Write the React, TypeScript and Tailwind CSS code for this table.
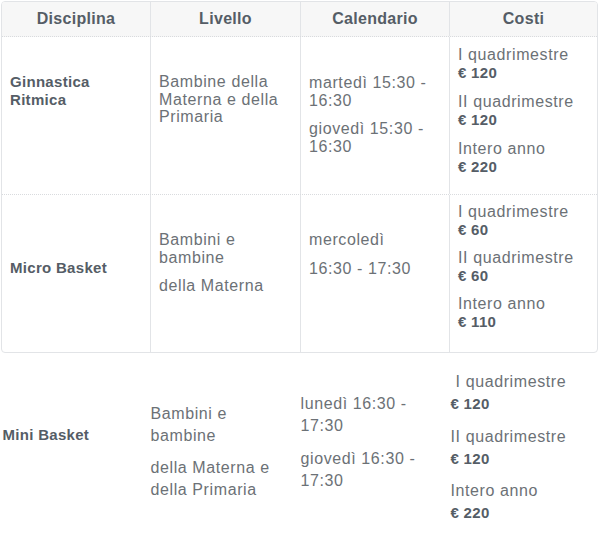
import type { ReactNode } from 'react'

type Cost = { label: string; price: string }

// one paragraph = list of lines
function Paras({ paras, gap }: { paras: string[][]; gap: string }) {
  return (
    <div className={`flex flex-col ${gap}`}>
      {paras.map((lines, i) => (
        <p key={i}>
          {lines.map((l, j) => (
            <span key={j}>
              {l}
              {j < lines.length - 1 && <br />}
            </span>
          ))}
        </p>
      ))}
    </div>
  )
}

function Costs({ items, gap }: { items: Cost[]; gap: string }) {
  return (
    <div className={`flex flex-col ${gap}`}>
      {items.map((c, i) => (
        <p key={i}>
          <span className="whitespace-pre">{c.label}</span>
          <br />
          <strong className="text-[15px] font-bold tracking-[0.3px] text-[#555d66]">{c.price}</strong>
        </p>
      ))}
    </div>
  )
}

function Cell({ children, className = '' }: { children: ReactNode; className?: string }) {
  return <div className={`px-2 ${className}`}>{children}</div>
}

const headers = ['Disciplina', 'Livello', 'Calendario', 'Costi']

export default function App() {
  return (
    <div className="w-[600px] h-[541px] bg-white font-['Liberation_Sans',Arial,sans-serif] text-[16px] tracking-[0.6px] text-[#6c7176]">
      {/* Bordered table */}
      <div className="ml-px mt-px w-[597px] border border-[#e2e4e7] rounded-[4px] overflow-hidden">
        {/* Header */}
        <div className="grid grid-cols-[148px_150px_149px_148px] h-[35px] bg-[#f7f7f7] border-b border-dotted border-b-[#d9dbde]">
          {headers.map((h, i) => (
            <div
              key={h}
              className={`flex items-center justify-center font-bold tracking-[0.3px] leading-[18px] text-[#555d66] ${i > 0 ? 'border-l border-[#e2e4e7]' : ''}`}
            >
              {h}
            </div>
          ))}
        </div>

        {/* Ginnastica Ritmica */}
        <div className="grid grid-cols-[148px_150px_149px_148px] h-[158px] border-b border-dotted border-b-[#d9dbde] leading-[17.5px]">
          <Cell className="pt-[36px] text-[15px] font-bold tracking-[0.3px] text-[#555d66]">
            Ginnastica
            <br />
            Ritmica
          </Cell>
          <Cell className="pt-[36px] border-l border-[#e2e4e7]">
            <Paras gap="gap-[11px]" paras={[['Bambine della', 'Materna e della', 'Primaria']]} />
          </Cell>
          <Cell className="pt-[37px] border-l border-[#e2e4e7]">
            <Paras
              gap="gap-[11px]"
              paras={[
                ['martedì 15:30 -', '16:30'],
                ['giovedì 15:30 -', '16:30'],
              ]}
            />
          </Cell>
          <Cell className="pt-[9px] border-l border-[#e2e4e7]">
            <Costs
              gap="gap-[12px]"
              items={[
                { label: 'I quadrimestre', price: '€ 120' },
                { label: 'II quadrimestre', price: '€ 120' },
                { label: 'Intero anno', price: '€ 220' },
              ]}
            />
          </Cell>
        </div>

        {/* Micro Basket */}
        <div className="grid grid-cols-[148px_150px_149px_148px] h-[157px] leading-[17.5px]">
          <Cell className="pt-[64px] text-[15px] font-bold tracking-[0.3px] text-[#555d66]">Micro Basket</Cell>
          <Cell className="pt-[36px] border-l border-[#e2e4e7]">
            <Paras gap="gap-[11px]" paras={[['Bambini e', 'bambine'], ['della Materna']]} />
          </Cell>
          <Cell className="pt-[36px] border-l border-[#e2e4e7]">
            <Paras gap="gap-[11px]" paras={[['mercoledì'], ['16:30 - 17:30']]} />
          </Cell>
          <Cell className="pt-[8px] border-l border-[#e2e4e7]">
            <Costs
              gap="gap-[11px]"
              items={[
                { label: 'I quadrimestre', price: '€ 60' },
                { label: 'II quadrimestre', price: '€ 60' },
                { label: 'Intero anno', price: '€ 110' },
              ]}
            />
          </Cell>
        </div>
      </div>

      {/* Mini Basket - row without borders */}
      <div className="grid grid-cols-[148px_150px_150px_1fr] h-[188px] pl-[2.5px] leading-[22px]">
        <div className="pt-[71px] text-[15px] font-bold tracking-[0.3px] text-[#555d66]">Mini Basket</div>
        <div className="pt-[49.5px]">
          <Paras gap="gap-[10.5px]" paras={[['Bambini e', 'bambine'], ['della Materna e', 'della Primaria']]} />
        </div>
        <div className="pt-[40px]">
          <Paras
            gap="gap-[10.5px]"
            paras={[
              ['lunedì 16:30 -', '17:30'],
              ['giovedì 16:30 -', '17:30'],
            ]}
          />
        </div>
        <div className="pt-[18px]">
          <Costs
            gap="gap-[10.5px]"
            items={[
              { label: '\u00a0I quadrimestre', price: '€ 120' },
              { label: 'II quadrimestre', price: '€ 120' },
              { label: 'Intero anno', price: '€ 220' },
            ]}
          />
        </div>
      </div>
    </div>
  )
}
